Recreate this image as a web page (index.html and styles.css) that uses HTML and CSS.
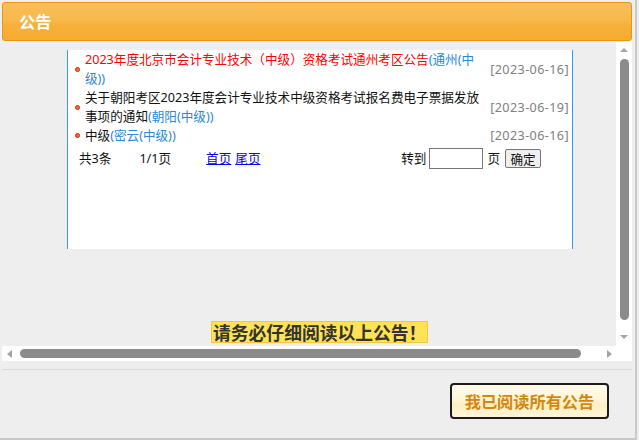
FILE: index.html
```html
<!DOCTYPE html>
<html lang="zh-CN">
<head>
<meta charset="utf-8">
<title>公告</title>
<link rel="stylesheet" href="styles.css">
</head>
<body>
<div class="frame">
  <div class="head">公告</div>
  <div class="scrollbox">
    <div class="viewport">
      <div class="list">
        <div class="item">
          <span class="dot"></span>
          <div class="title"><span class="red">2023年度北京市会计专业技术（中级）资格考试通州考区公告</span><span class="area">(通州(中级))</span></div>
          <div class="date">[2023-06-16]</div>
        </div>
        <div class="item">
          <span class="dot"></span>
          <div class="title">关于朝阳考区2023年度会计专业技术中级资格考试报名费电子票据发放事项的通知<span class="area">(朝阳(中级))</span></div>
          <div class="date">[2023-06-19]</div>
        </div>
        <div class="item">
          <span class="dot"></span>
          <div class="title">中级<span class="area">(密云(中级))</span></div>
          <div class="date">[2023-06-16]</div>
        </div>
        <div class="pager">
          <span class="count">共3条</span>
          <span class="pageno">1/1页</span>
          <span class="links"><a href="#">首页</a><a href="#">尾页</a></span>
          <span class="jump">
            <span>转到</span>
            <input class="jump-input" type="text">
            <span>页</span>
            <button class="jump-btn">确定</button>
          </span>
        </div>
      </div>
      <div class="notice-row"><span class="notice">请务必仔细阅读以上公告！</span></div>
    </div>
    <div class="vbar">
      <span class="arrow-up"></span>
      <span class="vthumb"></span>
      <span class="arrow-down"></span>
    </div>
    <div class="hbar">
      <span class="arrow-left"></span>
      <span class="hthumb"></span>
      <span class="arrow-right"></span>
    </div>
    <div class="corner"></div>
  </div>
  <div class="divider"></div>
  <div class="footer">
    <button class="read-btn">我已阅读所有公告</button>
  </div>
</div>
</body>
</html>
```
FILE: styles.css
```css
* { box-sizing: border-box; }
html, body { margin: 0; padding: 0; }
body {
  background: #eeeeee;
  font-family: "Noto Sans", "Noto Sans CJK SC", sans-serif;
  font-size: 12.6px;
  color: #111;
}
.frame {
  width: 637px;
  height: 440px;
  padding: 2px 3px 0 2px;
  border-right: 2px solid #c9c9c9;
  border-bottom: 2px solid #c9c9c9;
  display: flex;
  flex-direction: column;
}
.head {
  height: 39px;
  border: 1px solid #eb9514;
  border-radius: 3px;
  background: linear-gradient(#f9be5a 0%, #f8b94d 45%, #f6b03a 60%, #f5ac2f 100%);
  color: #fff;
  font-weight: bold;
  font-size: 16.2px;
  line-height: 37px;
  padding-left: 16px;
  font-family: "Noto Sans CJK SC", sans-serif;
}
.scrollbox {
  margin-top: 1px;
  display: grid;
  grid-template-columns: 614px 16px;
  grid-template-rows: 304px 15px;
}
.viewport {
  background: #eeeeee;
  display: flex;
  flex-direction: column;
  overflow: hidden;
}
.list {
  margin: 8px 0 0 65px;
  width: 506px;
  height: 199px;
  background: #fff;
  border-left: 1px solid #3797f0;
  border-right: 1px solid #3797f0;
  padding: 0 3px 0 6px;
  line-height: 19px;
}
.item {
  display: grid;
  grid-template-columns: 11px 401px 1fr;
  align-items: center;
}
.dot {
  width: 5px;
  height: 5px;
  margin-left: 1px;
  border-radius: 50%;
  background: #ff6a2a;
  border: 1px solid #c8281a;
}
.title { color: #111; }
.red { color: #ff0000; }
.area { color: #2b88d6; }
.date {
  text-align: right;
  color: #808080;
  letter-spacing: 0.4px;
}
.pager {
  height: 26px;
  display: flex;
  align-items: center;
  padding: 0 28px 0 5px;
  color: #111;
}
.pageno { margin-left: 28px; }
.links { margin-left: 35px; display: flex; gap: 4px; }
.links a { color: #0000ee; text-decoration: underline; }
.jump {
  margin-left: auto;
  display: flex;
  align-items: center;
}
.jump-input {
  width: 54px;
  height: 21px;
  margin: 0 4px 0 3px;
  border: 1px solid #767676;
  background: #fff;
  padding: 0;
}
.jump-btn {
  width: 36px;
  height: 19px;
  margin-left: 5px;
  padding: 0;
  border: 1px solid #767676;
  border-radius: 2px;
  background: #efefef;
  font-family: "Noto Sans CJK SC", sans-serif;
  font-size: 12.6px;
  line-height: 17px;
  color: #111;
}
.notice-row {
  margin-top: 72px;
  padding-left: 209px;
  display: flex;
}
.notice {
  height: 22px;
  line-height: 20px;
  padding: 0 1px 0 1px;
  background: #ffe255;
  border: 1px solid #f2c93c;
  color: #333;
  font-weight: bold;
  font-size: 17.8px;
  font-family: "Noto Sans CJK SC", sans-serif;
}
.vbar {
  background: #fff;
  display: flex;
  flex-direction: column;
  align-items: center;
  padding-top: 6px;
}
.arrow-up {
  width: 0; height: 0;
  border-left: 4px solid transparent;
  border-right: 4px solid transparent;
  border-bottom: 4px solid #a3a3a3;
}
.vthumb {
  margin-top: 7px;
  width: 9px;
  height: 261px;
  border-radius: 5px;
  background: #8b8b8b;
}
.arrow-down {
  margin-top: 15px;
  width: 0; height: 0;
  border-left: 4px solid transparent;
  border-right: 4px solid transparent;
  border-top: 4px solid #a3a3a3;
}
.hbar {
  background: #fff;
  display: flex;
  align-items: center;
  padding-left: 5px;
}
.arrow-left {
  width: 0; height: 0;
  border-top: 4px solid transparent;
  border-bottom: 4px solid transparent;
  border-right: 5px solid #a3a3a3;
}
.hthumb {
  margin-left: 8px;
  width: 561px;
  height: 9px;
  border-radius: 5px;
  background: #8b8b8b;
}
.arrow-right {
  margin-left: 26px;
  width: 0; height: 0;
  border-top: 4px solid transparent;
  border-bottom: 4px solid transparent;
  border-left: 5px solid #a3a3a3;
}
.corner { background: #fff; }
.divider {
  margin-top: 8px;
  height: 1px;
  background: #d9d9d9;
}
.footer {
  display: flex;
  justify-content: flex-end;
  padding: 13px 23px 0 0;
}
.read-btn {
  width: 159px;
  height: 36px;
  border: 2px solid #1c1c1c;
  border-radius: 4px;
  background: linear-gradient(#fffbea 0%, #fff7dc 40%, #fcefc2 62%, #fff6da 100%);
  color: #d4860e;
  font-weight: bold;
  font-size: 16.2px;
  font-family: "Noto Sans CJK SC", sans-serif;
  padding: 0;
}
```
